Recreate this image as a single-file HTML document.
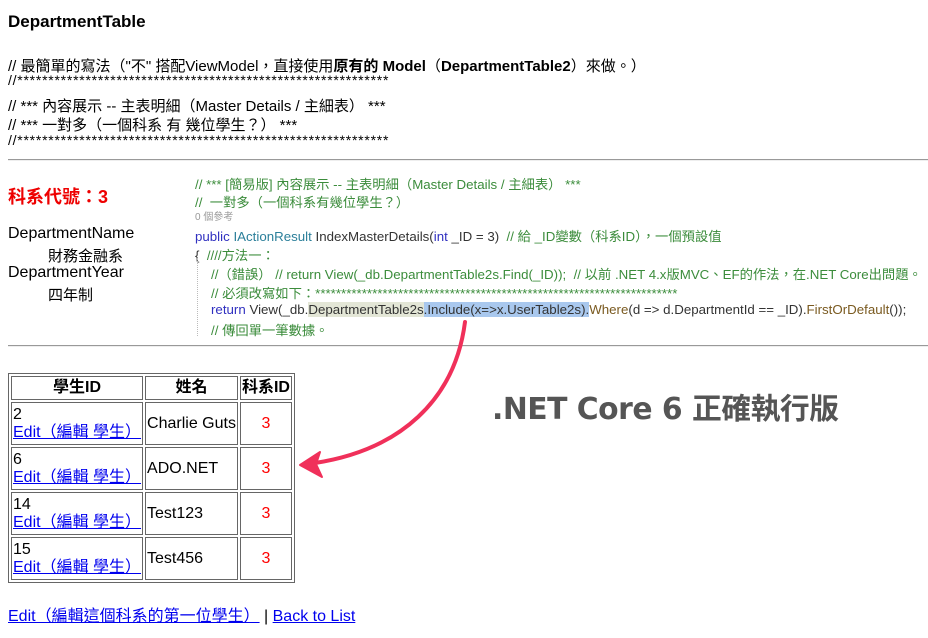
<!DOCTYPE html>
<html><head><meta charset="utf-8"><style>
body{margin:0;width:928px;height:638px;background:#fff;font-family:"Liberation Sans","Noto Sans CJK TC",sans-serif;color:#000;position:relative;overflow:hidden}
.a{position:absolute;white-space:nowrap}
.c{font-size:13.3px;color:#3b8c3b;font-family:"Liberation Sans","Noto Sans CJK TC",sans-serif;}
.k{color:#3030c0}.t{color:#2b7f9a}.n{color:#333}
.st{font-size:14px;letter-spacing:0.75px;line-height:10px}
hr{position:absolute;left:8px;width:920px;margin:0;border:0;border-top:1px solid #999;border-bottom:1px solid #eee}
table{position:absolute;left:8px;top:373px;border:1px solid #666;border-collapse:separate;border-spacing:2px;font-size:16px;table-layout:fixed;white-space:nowrap}
td,th{border:1px solid #666;padding:0 1px;height:41px;line-height:18px;overflow:hidden}
th{height:22px}
a{color:#00e;text-decoration:underline}
.r{color:red;text-align:center}
</style></head><body>
<div class="a" style="left:8px;top:12px;font-size:17px;font-weight:bold">DepartmentTable</div>
<div class="a" style="left:8px;top:55px;font-size:15px">// 最簡單的寫法（"不" 搭配ViewModel，直接使用<b>原有的 Model</b>（<b>DepartmentTable2</b>）來做。）</div>
<div class="a st" style="left:8px;top:75px">//************************************************************</div>
<div class="a" style="left:8px;top:95px;font-size:15px">// *** 內容展示 -- 主表明細（Master Details / 主細表） ***</div>
<div class="a" style="left:8px;top:114px;font-size:15px">// *** 一對多（一個科系 有 幾位學生？） ***</div>
<div class="a st" style="left:8px;top:135px">//************************************************************</div>
<hr style="top:159px">
<div class="a" style="left:8px;top:183px;font-size:18px;font-weight:bold;color:#e00">科系代號：3</div>
<div class="a" style="left:8px;top:225px;font-size:16px">DepartmentName</div>
<div class="a" style="left:48px;top:245px;font-size:15px">財務金融系</div>
<div class="a" style="left:8px;top:264px;font-size:16px">DepartmentYear</div>
<div class="a" style="left:48px;top:284px;font-size:15px">四年制</div>
<div class="a c" style="left:195px;top:174px">// *** [簡易版] 內容展示 -- 主表明細（Master Details / 主細表） ***</div>
<div class="a c" style="left:195px;top:192px">//&nbsp; 一對多（一個科系有幾位學生？）</div>
<div class="a" style="left:195px;top:208px;font-size:10px;color:#999">0 個參考</div>
<div class="a c" style="left:195px;top:226px"><span class="k">public</span> <span class="t">IActionResult</span> <span class="n">IndexMasterDetails(</span><span class="k">int</span> <span class="n">_ID = 3)</span>&nbsp; // 給 _ID變數（科系ID），一個預設值</div>
<div class="a c" style="left:195px;top:245px"><span class="n">{</span>&nbsp; ////方法一：</div>
<div class="a c" style="left:211px;top:264px">//（錯誤） // return View(_db.DepartmentTable2s.Find(_ID));&nbsp; // 以前 .NET 4.x版MVC、EF的作法，在.NET Core出問題。</div>
<div class="a c" style="left:211px;top:283px">// 必須改寫如下：**********************************************************************</div>
<div class="a c n" style="left:211px;top:302px"><span class="k">return</span> View(_db.<span style="background:#e3e6d6">DepartmentTable2s</span><span style="background:#a9c8ee">.Include(x=&gt;x.UserTable2s).</span><span style="color:#7a5a20">Where</span>(d =&gt; d.DepartmentId == _ID).<span style="color:#7a5a20">FirstOrDefault</span>());</div>
<div class="a c" style="left:211px;top:320px">// 傳回單一筆數據。</div>
<div class="a" style="left:197px;top:258px;height:78px;border-left:1px dotted #bbb"></div>
<hr style="top:345px">
<table>
<colgroup><col style="width:131px"><col style="width:92px"><col style="width:50px"></colgroup>
<tr><th>學生ID</th><th>姓名</th><th>科系ID</th></tr>
<tr><td>2<br><a>Edit（編輯 學生）</a></td><td>Charlie Guts</td><td class="r">3</td></tr>
<tr><td>6<br><a>Edit（編輯 學生）</a></td><td>ADO.NET</td><td class="r">3</td></tr>
<tr><td>14<br><a>Edit（編輯 學生）</a></td><td>Test123</td><td class="r">3</td></tr>
<tr><td>15<br><a>Edit（編輯 學生）</a></td><td>Test456</td><td class="r">3</td></tr>
</table>
<div class="a" style="left:8px;top:602px;font-size:16px"><a>Edit（編輯這個科系的第一位學生）</a> | <a>Back to List</a></div>
<div class="a" style="left:492px;top:384px;font-size:29.8px;font-weight:bold;color:#555;font-family:'DejaVu Sans','Noto Sans CJK TC',sans-serif;letter-spacing:-0.5px">.NET Core 6 正確執行版</div>
<svg class="a" style="left:0;top:0" width="928" height="638"><path d="M465 322 C455 400 400 450 315 463" stroke="#f0305a" stroke-width="4" fill="none" stroke-linecap="round"/><path d="M300 465 L320 452 L316 464 L322 477 Z" fill="#f0305a" stroke="#f0305a" stroke-width="2" stroke-linejoin="round"/></svg>
</body></html>
